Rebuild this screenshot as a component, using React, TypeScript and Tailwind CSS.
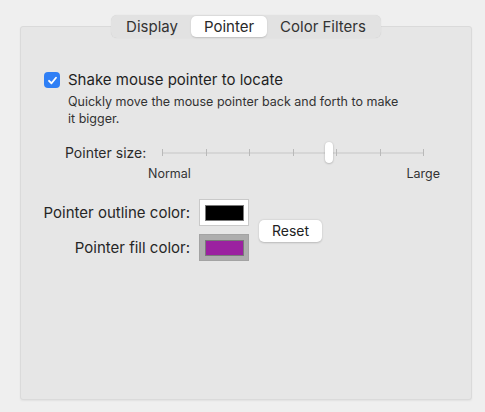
import React, { useState } from 'react';

const tabs = ['Display', 'Pointer', 'Color Filters'];
const ticks = [0, 1, 2, 3, 4, 5, 6];

const ColorWell: React.FC<{ color: string; active?: boolean }> = ({ color, active }) => (
  <div
    className={`w-[50px] h-[27px] flex items-center justify-center border ${
      active ? 'bg-[#adadad] border-[#a3a3a3]' : 'bg-white border-[#c9c9c9]'
    }`}
  >
    <div className="w-[39px] h-[16px] border border-[#7a7a7a]" style={{ backgroundColor: color }} />
  </div>
);

export default function App() {
  const [active, setActive] = useState('Pointer');
  const [shake, setShake] = useState(true);

  return (
    <div
      className="w-[485px] h-[412px] bg-[#efefef] pt-[15px] pl-[20px] pr-[13px] text-[#262626] overflow-hidden"
      style={{ fontFamily: 'Inter, "Liberation Sans", sans-serif' }}
    >
      {/* Tabs */}
      <div className="relative z-10 flex justify-center">
        <div className="flex items-center h-[23px] px-[2px] bg-[#e2e2e2] rounded-[6px] shadow-[0_0_1px_rgba(0,0,0,0.15)]">
          {tabs.map((t) => (
            <button
              key={t}
              onClick={() => setActive(t)}
              className={`h-[21px] px-[13px] text-[15px] leading-none rounded-[5px] ${
                active === t ? 'bg-white shadow-[0_0.5px_1.5px_rgba(0,0,0,0.15)] text-[#2a2a2a]' : 'text-[#333]'
              }`}
            >
              {t}
            </button>
          ))}
        </div>
      </div>

      {/* Panel */}
      <div className="-mt-[12px] h-[374px] bg-[#e6e6e6] border border-[#dadada] rounded-[3px] shadow-[0_1px_2px_rgba(0,0,0,0.06)] pt-[42px] pl-[23px] pr-[20px]">
        <label className="flex items-center gap-[8px] cursor-pointer" onClick={() => setShake(!shake)}>
          <span
            className={`w-[16px] h-[16px] rounded-[4px] flex items-center justify-center ${
              shake ? 'bg-[#2f7ff5]' : 'bg-white border border-[#bbb]'
            }`}
          >
            {shake && (
              <svg width="11" height="11" viewBox="0 0 12 12" fill="none">
                <path d="M2.2 6.3 L4.9 9 L9.8 3" stroke="white" strokeWidth="2" strokeLinecap="round" strokeLinejoin="round" />
              </svg>
            )}
          </span>
          <span className="text-[15px] text-[#1f1f1f]">Shake mouse pointer to locate</span>
        </label>
        <p className="ml-[24px] mt-[1px] w-[340px] text-[12.5px] leading-[17px] text-[#333]">
          Quickly move the mouse pointer back and forth to make it bigger.
        </p>

        {/* Slider */}
        <div className="mt-[15px] flex items-center">
          <span className="ml-[21px] w-[97px] text-[14px] text-[#2a2a2a]">Pointer size:</span>
          <div className="relative w-[262px] h-[22px] flex items-center">
            <div className="w-full h-[2px] bg-[#d6d6d6]" />
            <div className="absolute inset-0 flex items-center justify-between">
              {ticks.map((i) => (
                <div key={i} className="w-[1px] h-[7px] bg-[#b9b9b9]" />
              ))}
            </div>
            <div className="absolute left-[163px] top-0 w-[8px] h-[21px] bg-white rounded-[4px] shadow-[0_0.5px_2px_rgba(0,0,0,0.3)]" />
          </div>
        </div>
        <div className="flex justify-between ml-[104px] mt-[1px] w-[292px] text-[12.5px] text-[#333]">
          <span>Normal</span>
          <span>Large</span>
        </div>

        {/* Colours */}
        <div className="mt-[16px] flex items-center">
          <div className="grid grid-cols-[auto_auto] gap-x-[9px] gap-y-[8px] items-center">
            <span className="w-[148px] -ml-[2px] text-right text-[15px] text-[#262626]">Pointer outline color:</span>
            <ColorWell color="#000000" />
            <span className="w-[148px] -ml-[2px] text-right text-[15px] text-[#262626]">Pointer fill color:</span>
            <ColorWell color="#9b21a0" active />
          </div>
          <button className="ml-[10px] mt-[1px] h-[22px] w-[63px] bg-white rounded-[5px] shadow-[0_0.5px_2px_rgba(0,0,0,0.2)] text-[14px] text-[#222]">
            Reset
          </button>
        </div>
      </div>
    </div>
  );
}
